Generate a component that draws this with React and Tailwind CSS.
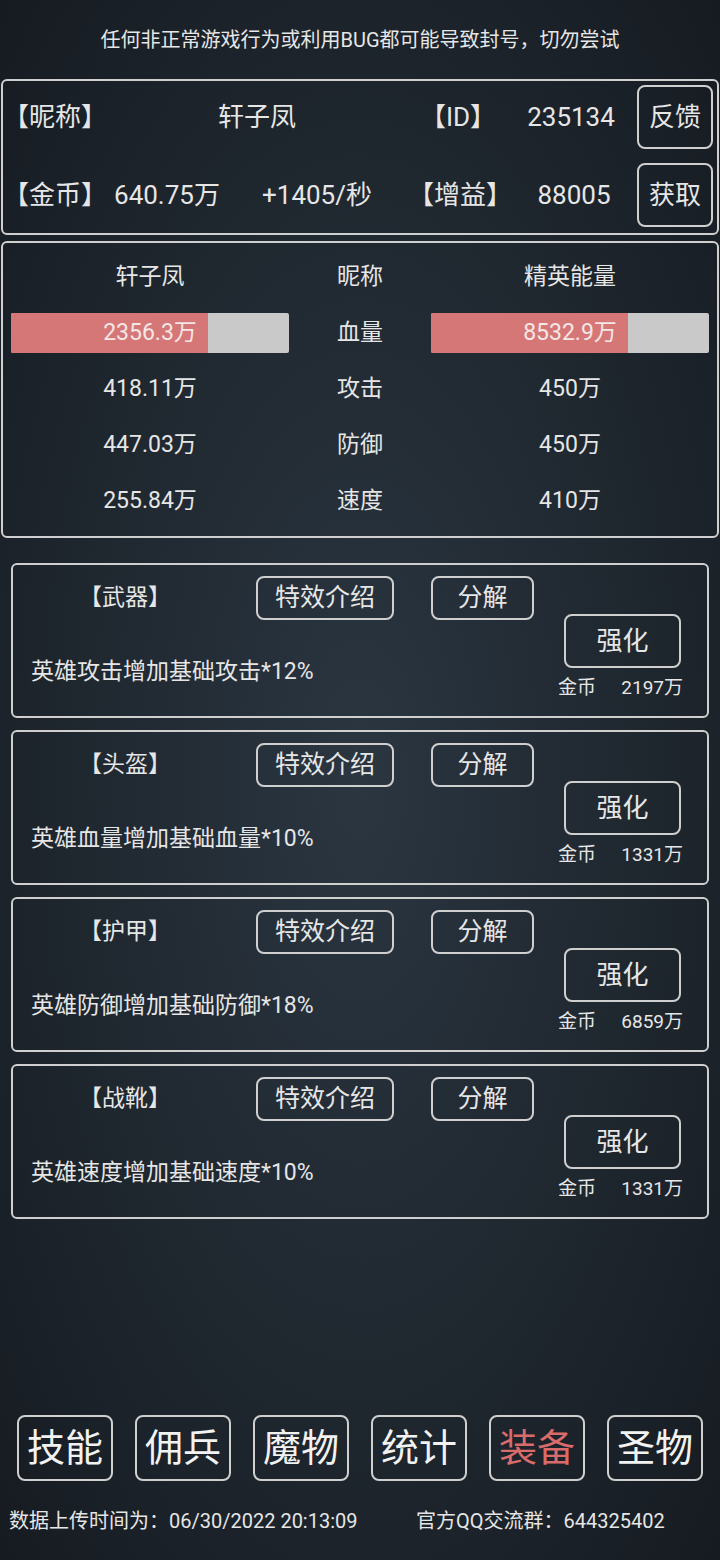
import React from "react";

const cards = [
  { name: "【武器】", desc: "英雄攻击增加基础攻击*12%", cost: "2197万" },
  { name: "【头盔】", desc: "英雄血量增加基础血量*10%", cost: "1331万" },
  { name: "【护甲】", desc: "英雄防御增加基础防御*18%", cost: "6859万" },
  { name: "【战靴】", desc: "英雄速度增加基础速度*10%", cost: "1331万" },
];

const stats = [
  ["418.11万", "攻击", "450万"],
  ["447.03万", "防御", "450万"],
  ["255.84万", "速度", "410万"],
];

const nav = ["技能", "佣兵", "魔物", "统计", "装备", "圣物"];

function Bar({ text }) {
  return (
    <div className="relative h-[40px] w-[278px] rounded-[2px] bg-[#c9c9c9] overflow-hidden">
      <div className="h-full w-[197px] bg-[#d47776]" />
      <div className="absolute inset-0 flex items-center justify-center text-[23px] text-[#f6e6e6]">
        {text}
      </div>
    </div>
  );
}

export default function App() {
  return (
    <div className="w-[720px] h-[1560px] flex flex-col text-[#e6e6e6] font-['Roboto','Noto_Sans_CJK_SC',sans-serif] bg-[radial-gradient(ellipse_at_center,#2b3641_0%,#1f272f_55%,#161b21_100%)]">
      <div className="h-[79px] flex items-center justify-center text-[20px]">
        任何非正常游戏行为或利用BUG都可能导致封号，切勿尝试
      </div>

      {/* Panel 1 */}
      <div className="mx-[1px] h-[156px] border-2 border-[#cfcfcf] rounded-[6px] pt-[4px] flex flex-col gap-[14px] text-[26px]">
        <div className="flex items-center h-[64px]">
          <span className="w-[100px] text-center">【昵称】</span>
          <span className="w-[308px] text-center">轩子凤</span>
          <span className="w-[94px] text-center">【ID】</span>
          <span className="w-[132px] text-center">235134</span>
          <button className="w-[76px] h-[64px] border-2 border-[#cfcfcf] rounded-[8px] flex items-center justify-center">反馈</button>
        </div>
        <div className="flex items-center h-[64px]">
          <span className="w-[100px] text-center">【金币】</span>
          <span className="w-[128px] text-center">640.75万</span>
          <span className="w-[172px] text-center">+1405/秒</span>
          <span className="w-[114px] text-center">【增益】</span>
          <span className="w-[114px] text-center">88005</span>
          <span className="w-[6px]" />
          <button className="w-[76px] h-[64px] border-2 border-[#cfcfcf] rounded-[8px] flex items-center justify-center">获取</button>
        </div>
      </div>

      {/* Panel 2 */}
      <div className="mx-[1px] mt-[6px] h-[297px] border-2 border-[#cfcfcf] rounded-[6px] pt-[6px] px-[8px] text-[23px]">
        <div className="grid grid-cols-[278px_142px_278px]">
          <div className="h-[56px] flex items-center justify-center">轩子凤</div>
          <div className="h-[56px] flex items-center justify-center">昵称</div>
          <div className="h-[56px] flex items-center justify-center">精英能量</div>

          <div className="h-[56px] flex items-center justify-center">
            <Bar text="2356.3万" />
          </div>
          <div className="h-[56px] flex items-center justify-center">血量</div>
          <div className="h-[56px] flex items-center justify-center">
            <Bar text="8532.9万" />
          </div>

          {stats.map((r, i) => (
            <React.Fragment key={i}>
              <div className="h-[56px] flex items-center justify-center">{r[0]}</div>
              <div className="h-[56px] flex items-center justify-center">{r[1]}</div>
              <div className="h-[56px] flex items-center justify-center">{r[2]}</div>
            </React.Fragment>
          ))}
        </div>
      </div>

      {/* Cards */}
      <div className="mt-[25px] mx-[11px] flex flex-col gap-[12px]">
        {cards.map((c, i) => (
          <div key={i} className="h-[155px] border-2 border-[#cfcfcf] rounded-[6px] flex">
            <div className="flex-1 flex flex-col pt-[11px]">
              <div className="flex items-center h-[44px]">
                <span className="w-[224px] text-center text-[23px]">{c.name}</span>
                <button className="ml-[19px] w-[138px] h-[44px] border-2 border-[#cfcfcf] rounded-[8px] text-[25px] flex items-center justify-center">特效介绍</button>
                <button className="ml-[37px] w-[103px] h-[44px] border-2 border-[#cfcfcf] rounded-[8px] text-[25px] flex items-center justify-center">分解</button>
              </div>
              <div className="mt-[37px] pl-[18px] h-[30px] leading-[30px] text-[23px] whitespace-nowrap">{c.desc}</div>
            </div>
            <div className="w-[125px] mr-[24px] pt-[49px] flex flex-col">
              <button className="ml-[6px] w-[117px] h-[54px] border-2 border-[#cfcfcf] rounded-[8px] text-[26px] flex items-center justify-center">强化</button>
              <div className="mt-[8px] h-[24px] leading-[24px] flex justify-between text-[19px]">
                <span>金币</span>
                <span>{c.cost}</span>
              </div>
            </div>
          </div>
        ))}
      </div>

      {/* Nav */}
      <div className="mt-auto pl-[17px] flex gap-[22px]">
        {nav.map((n) => (
          <button
            key={n}
            className={`w-[96px] h-[66px] border-2 border-[#cfcfcf] rounded-[8px] text-[38px] flex items-center justify-center ${n === "装备" ? "text-[#d96b6b]" : "text-[#f2f2f2]"}`}
          >
            {n}
          </button>
        ))}
      </div>
      <div className="mt-[27px] mb-[26px] h-[26px] leading-[26px] flex text-[20px] whitespace-nowrap">
        <span className="pl-[9px] w-[416px]">数据上传时间为：06/30/2022 20:13:09</span>
        <span>官方QQ交流群：644325402</span>
      </div>
    </div>
  );
}
